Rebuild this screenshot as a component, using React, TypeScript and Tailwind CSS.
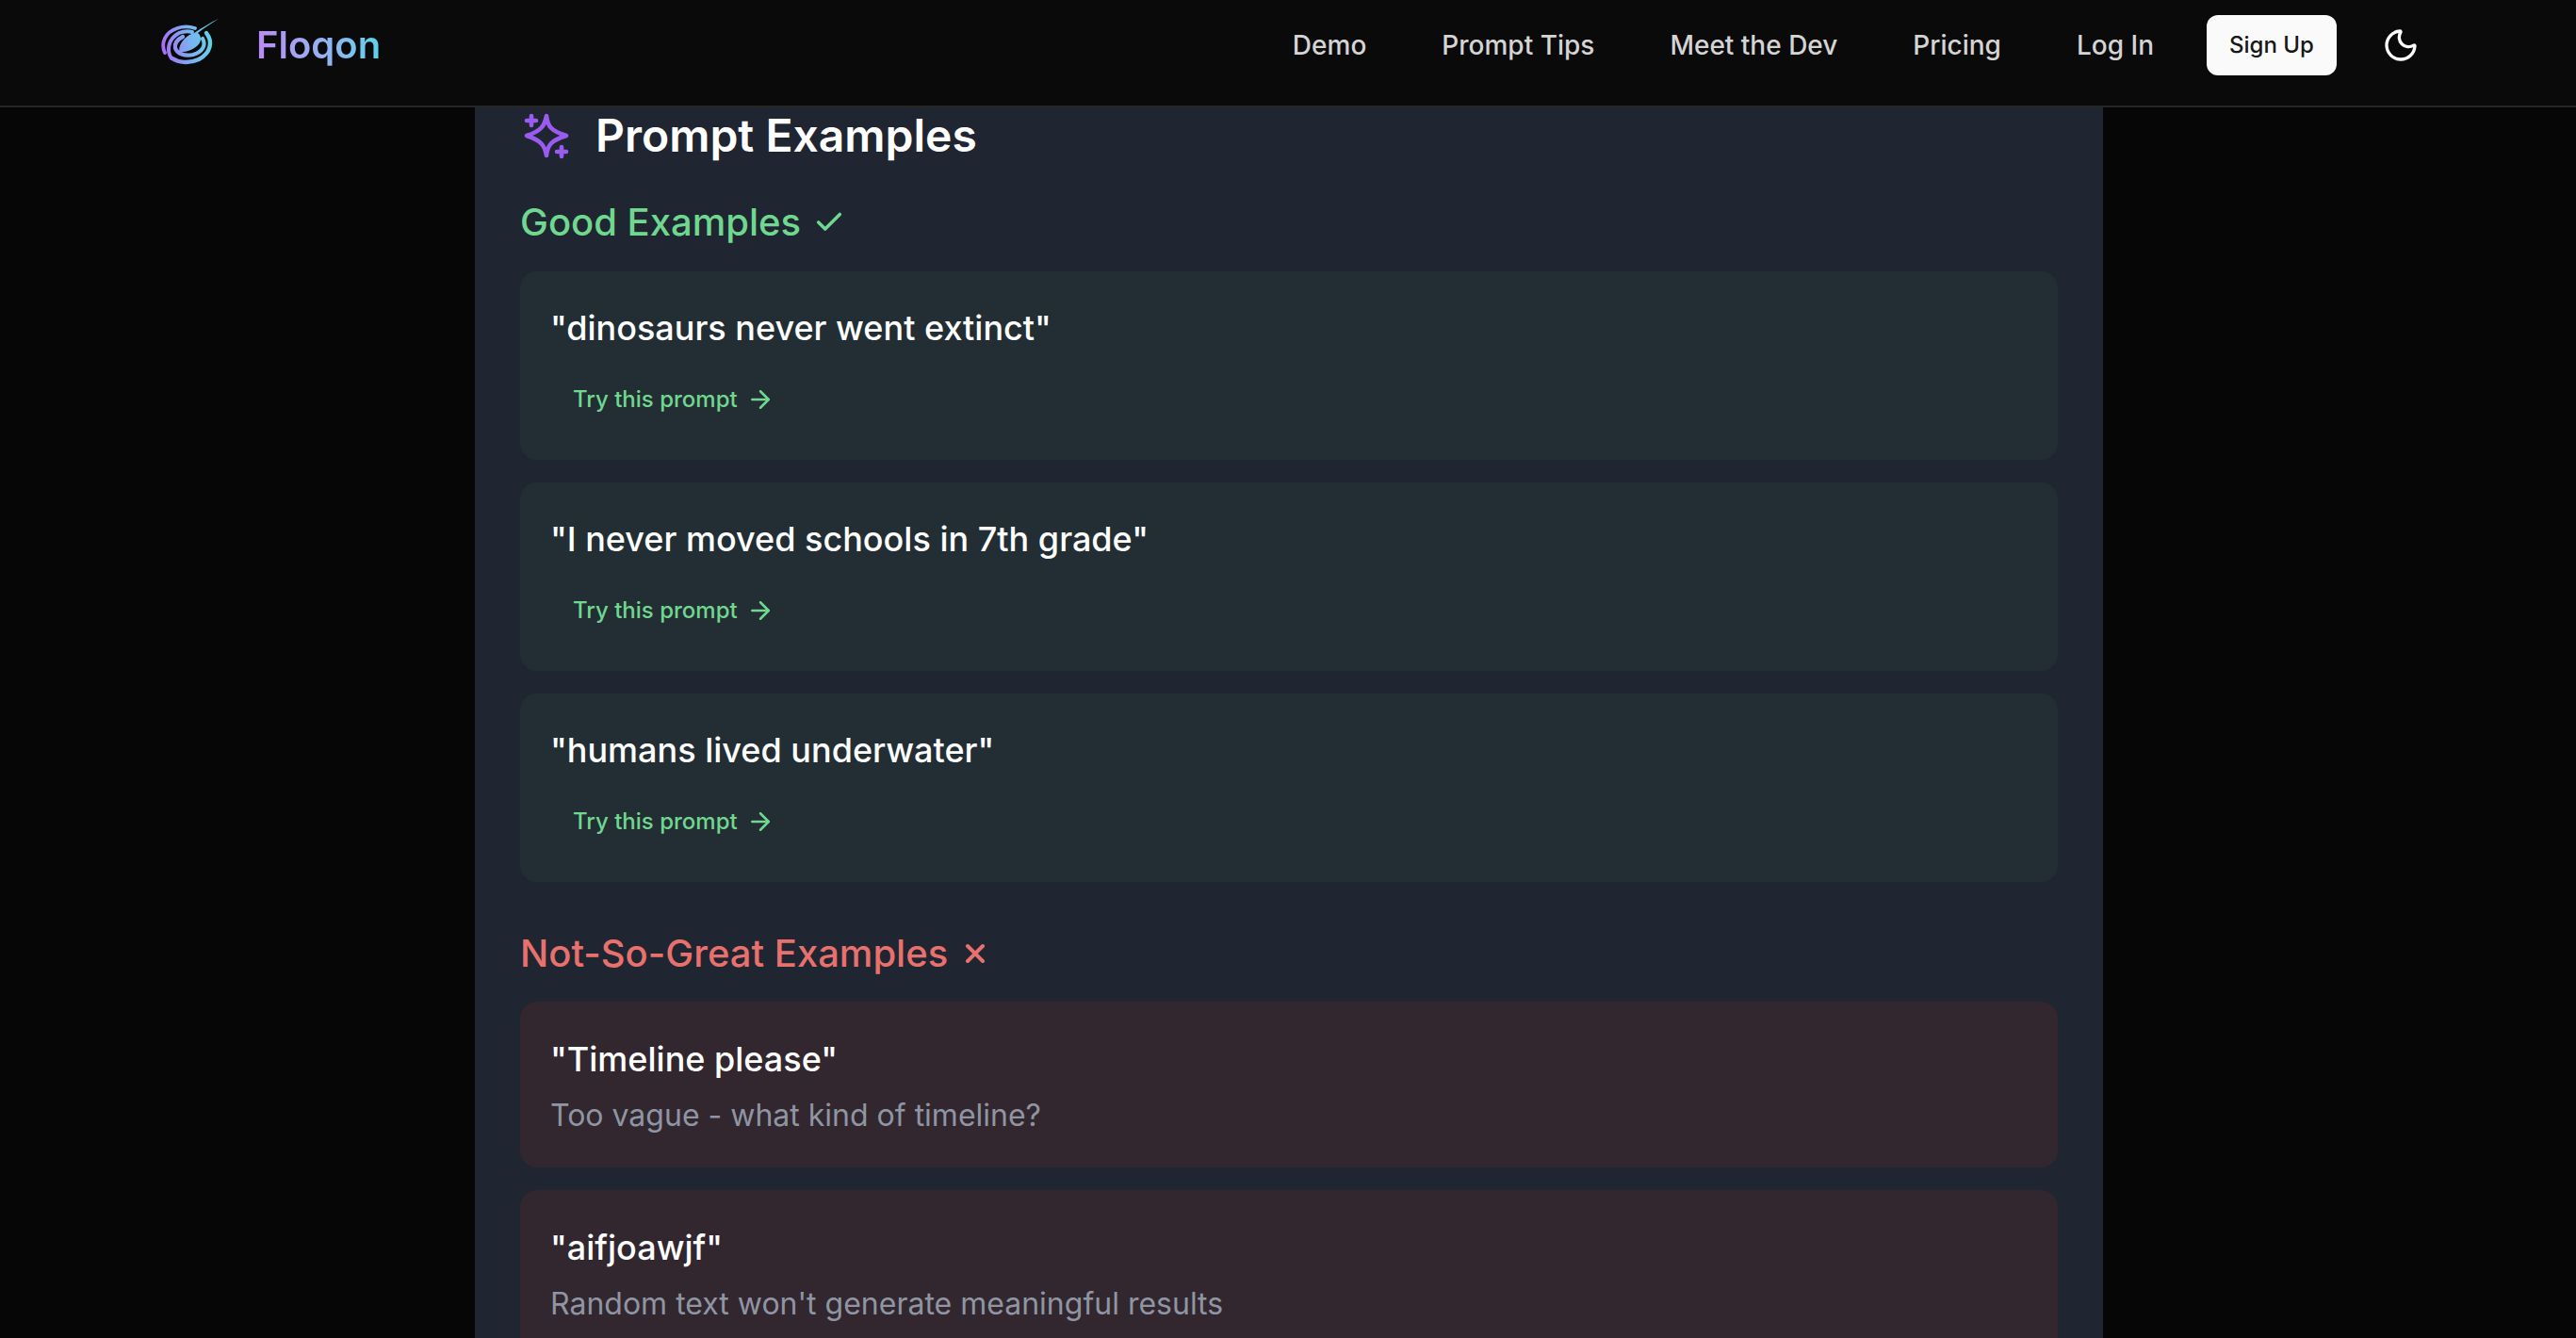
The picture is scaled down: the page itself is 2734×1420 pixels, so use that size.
import { ArrowRight, Check, Moon, X } from "lucide-react";

const navLinks = ["Demo", "Prompt Tips", "Meet the Dev", "Pricing", "Log In"];

const goodPrompts = [
  "dinosaurs never went extinct",
  "I never moved schools in 7th grade",
  "humans lived underwater",
];

const badPrompts = [
  { text: "Timeline please", why: "Too vague - what kind of timeline?" },
  { text: "aifjoawjf", why: "Random text won't generate meaningful results" },
];

function Logo() {
  return (
    <svg width="61" height="50" viewBox="0 0 61 50" fill="none" className="-mt-[6px] shrink-0">
      <defs>
        <linearGradient id="logoGrad" x1="0" y1="32" x2="58" y2="22" gradientUnits="userSpaceOnUse">
          <stop offset="0" stopColor="#a96bf6" />
          <stop offset="0.55" stopColor="#79b4f1" />
          <stop offset="1" stopColor="#5cd8e6" />
        </linearGradient>
      </defs>
      <g stroke="url(#logoGrad)" strokeLinecap="round" fill="none">
        <path d="M4 36C-1 25 5 14 17 10C23 8 30 8 36 10" strokeWidth="3.8" />
        <path d="M11 42C5 33 8 21 19 15C24 13 29 13 33 14" strokeWidth="4" />
        <path d="M48 15C55 24 53 36 40 43C29 48 18 46 12 42" strokeWidth="4.4" />
        <path d="M44 21C48 28 44 35 34 38C25 40 17 37 15 31C14 26 17 22 23 19" strokeWidth="4.2" />
      </g>
      <path
        d="M61 0C53 5 45 10 39 15C43 18 43 24 39 28C34 33 25 36 20 35C18 33 20 26 25 21C28 18 31 16 35 15C43 10 52 4 61 0Z"
        fill="url(#logoGrad)"
      />
    </svg>
  );
}

function PromptSparkle() {
  return (
    <svg width="54" height="54" viewBox="0 0 54 54" fill="none" className="shrink-0 text-[#9a5cf0]">
      <g stroke="currentColor" strokeLinecap="round" strokeLinejoin="round" strokeWidth="4.6">
        <path d="M28 6C29 17 33 22 49 27C33 32 29 37 28 48C26 37 22 32 7 27C22 22 26 17 28 6Z" />
        <path d="M12 6V16M7 11H17" />
        <path d="M44 39V49M39 44H49" />
      </g>
    </svg>
  );
}

function GoodCard({ text }: { text: string }) {
  return (
    <div className="h-[200px] rounded-[18px] bg-[#222e34] px-[32px] pt-[33px]">
      <p className="text-[36px] leading-[54px] font-medium text-white">"{text}"</p>
      <div className="mt-[31px] ml-[24px] flex items-center gap-[9px] text-[24px] leading-9 font-medium text-[#6fd88e]">
        Try this prompt
        <ArrowRight size={30} strokeWidth={2} />
      </div>
    </div>
  );
}

function BadCard({ text, why }: { text: string; why: string }) {
  return (
    <div className="h-[176px] rounded-[18px] bg-[#32272f] px-[32px] pt-[34px]">
      <p className="text-[36px] leading-[54px] font-medium text-white">"{text}"</p>
      <p className="mt-[9px] text-[32px] leading-[48px] text-[#8f95a3]">{why}</p>
    </div>
  );
}

export default function App() {
  return (
    <div className="flex h-screen flex-col overflow-hidden bg-[#060606] font-['Inter',sans-serif]">
      <header className="flex h-[114px] shrink-0 items-center justify-between border-b-2 border-[#262626] bg-[#0a0a0a] pr-[166px] pb-[16px] pl-[171px]">
        <div className="flex items-center gap-[40px]">
          <Logo />
          <span className="bg-gradient-to-r from-[#b98af5] to-[#5ad1ec] bg-clip-text text-[40px] leading-[60px] font-semibold text-transparent">
            Floqon
          </span>
        </div>
        <nav className="flex items-center gap-[80px]">
          {navLinks.map((link) => (
            <span key={link} className="text-[28px] leading-10 font-medium text-[#d4d4d4]">
              {link}
            </span>
          ))}
          <div className="-ml-[24px] flex items-center gap-[48px]">
            <button className="flex h-[64px] w-[138px] items-center justify-center rounded-[12px] bg-[#fafafa] text-[24px] font-medium text-[#171717]">
              Sign Up
            </button>
            <Moon size={40} strokeWidth={2} className="text-white" />
          </div>
        </nav>
      </header>
      <main className="flex-1 overflow-hidden pl-[2px]">
        <section className="mx-auto h-full w-[1728px] bg-[#1f2531] px-[48px]">
          <div className="flex items-center gap-[26px]">
            <PromptSparkle />
            <h2 className="text-[48px] leading-[60px] font-semibold text-white">Prompt Examples</h2>
          </div>
          <h3 className="mt-[32px] flex items-center gap-[13px] text-[40px] leading-[60px] font-medium text-[#6fd88e]">
            Good Examples
            <Check size={34} strokeWidth={2.5} />
          </h3>
          <div className="mt-[22px] flex flex-col gap-[24px]">
            {goodPrompts.map((p) => (
              <GoodCard key={p} text={p} />
            ))}
          </div>
          <h3 className="mt-[46px] flex items-center gap-[13px] text-[40px] leading-[60px] font-medium text-[#e7716c]">
            Not-So-Great Examples
            <X size={32} strokeWidth={3} />
          </h3>
          <div className="mt-[21px] flex flex-col gap-[24px]">
            {badPrompts.map((p) => (
              <BadCard key={p.text} text={p.text} why={p.why} />
            ))}
          </div>
        </section>
      </main>
    </div>
  );
}
